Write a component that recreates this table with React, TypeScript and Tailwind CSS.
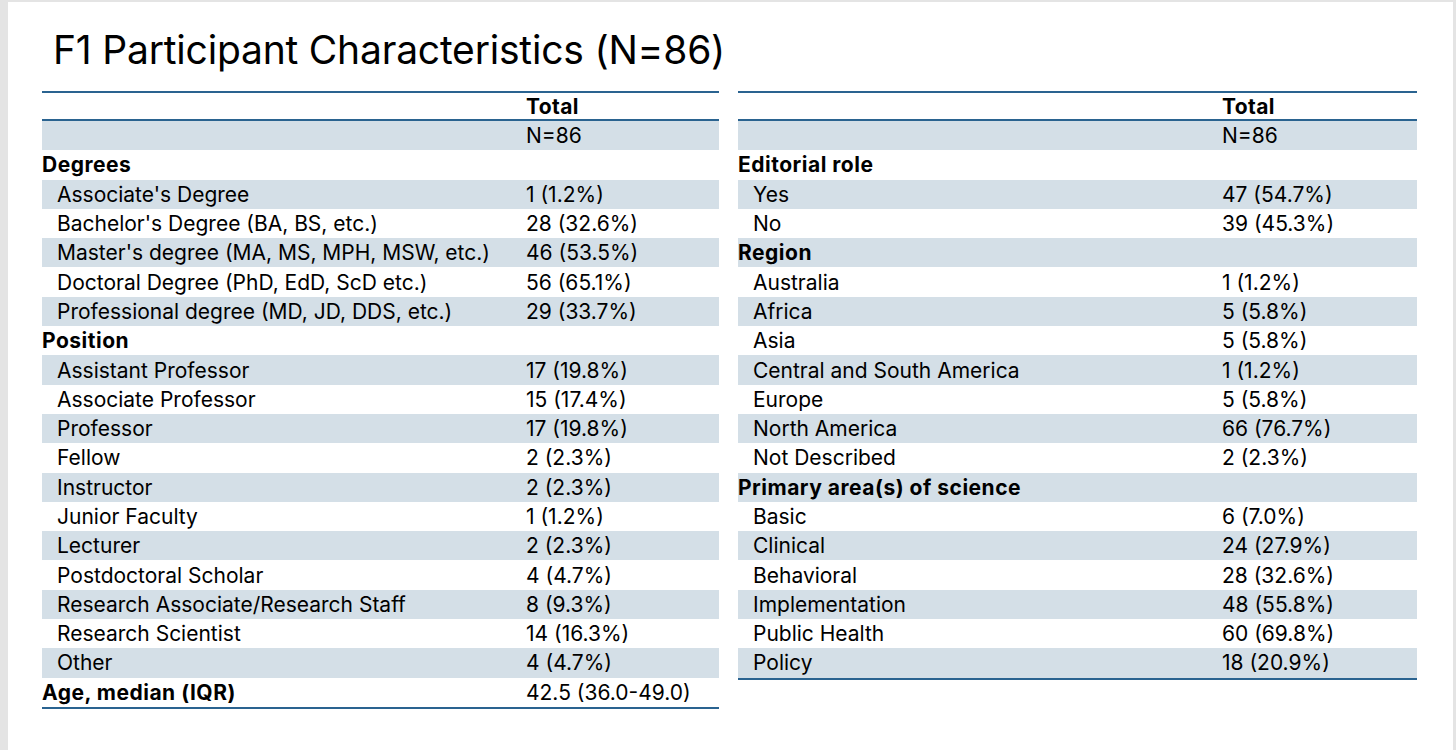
type Row = { label: string; value?: string; kind: "head" | "item" };

const leftRows: Row[] = [
  { label: "Degrees", kind: "head" },
  { label: "Associate's Degree", value: "1 (1.2%)", kind: "item" },
  { label: "Bachelor's Degree (BA, BS, etc.)", value: "28 (32.6%)", kind: "item" },
  { label: "Master's degree (MA, MS, MPH, MSW, etc.)", value: "46 (53.5%)", kind: "item" },
  { label: "Doctoral Degree (PhD, EdD, ScD etc.)", value: "56 (65.1%)", kind: "item" },
  { label: "Professional degree (MD, JD, DDS, etc.)", value: "29 (33.7%)", kind: "item" },
  { label: "Position", kind: "head" },
  { label: "Assistant Professor", value: "17 (19.8%)", kind: "item" },
  { label: "Associate Professor", value: "15 (17.4%)", kind: "item" },
  { label: "Professor", value: "17 (19.8%)", kind: "item" },
  { label: "Fellow", value: "2 (2.3%)", kind: "item" },
  { label: "Instructor", value: "2 (2.3%)", kind: "item" },
  { label: "Junior Faculty", value: "1 (1.2%)", kind: "item" },
  { label: "Lecturer", value: "2 (2.3%)", kind: "item" },
  { label: "Postdoctoral Scholar", value: "4 (4.7%)", kind: "item" },
  { label: "Research Associate/Research Staff", value: "8 (9.3%)", kind: "item" },
  { label: "Research Scientist", value: "14 (16.3%)", kind: "item" },
  { label: "Other", value: "4 (4.7%)", kind: "item" },
  { label: "Age, median (IQR)", value: "42.5 (36.0-49.0)", kind: "head" },
];

const rightRows: Row[] = [
  { label: "Editorial role", kind: "head" },
  { label: "Yes", value: "47 (54.7%)", kind: "item" },
  { label: "No", value: "39 (45.3%)", kind: "item" },
  { label: "Region", kind: "head" },
  { label: "Australia", value: "1 (1.2%)", kind: "item" },
  { label: "Africa", value: "5 (5.8%)", kind: "item" },
  { label: "Asia", value: "5 (5.8%)", kind: "item" },
  { label: "Central and South America", value: "1 (1.2%)", kind: "item" },
  { label: "Europe", value: "5 (5.8%)", kind: "item" },
  { label: "North America", value: "66 (76.7%)", kind: "item" },
  { label: "Not Described", value: "2 (2.3%)", kind: "item" },
  { label: "Primary area(s) of science", kind: "head" },
  { label: "Basic", value: "6 (7.0%)", kind: "item" },
  { label: "Clinical", value: "24 (27.9%)", kind: "item" },
  { label: "Behavioral", value: "28 (32.6%)", kind: "item" },
  { label: "Implementation", value: "48 (55.8%)", kind: "item" },
  { label: "Public Health", value: "60 (69.8%)", kind: "item" },
  { label: "Policy", value: "18 (20.9%)", kind: "item" },
];

function Table({ rows, width }: { rows: Row[]; width: string }) {
  return (
    <div className={`${width} border-t-2 border-b-2 border-[#2a6390]`}>
      <div className="grid h-[28px] grid-cols-[484px_1fr] items-center border-b-2 border-[#2a6390]">
        <span />
        <span className="font-bold tracking-[0.4px]">Total</span>
      </div>
      <div className="grid h-[29.3px] grid-cols-[484px_1fr] items-center bg-[#d4dfe7]">
        <span />
        <span>N=86</span>
      </div>
      {rows.map((r, i) => (
        <div
          key={r.label}
          className={`grid h-[29.3px] grid-cols-[484px_1fr] items-center ${i % 2 === 1 ? "bg-[#d4dfe7]" : ""}`}
        >
          <span className={r.kind === "head" ? "font-bold tracking-[0.5px]" : "pl-[15px]"}>{r.label}</span>
          <span>{r.value ?? ""}</span>
        </div>
      ))}
    </div>
  );
}

export default function App() {
  return (
    <div className="h-[750px] w-[1456px] bg-[#e4e4e4] pt-[2px] pl-[8px] pr-[3px]">
      <div className="h-full bg-white text-black [font-family:Inter,'Noto_Sans',sans-serif]">
        <h1 className="pt-[28px] pl-[45px] text-[39px] leading-none tracking-[-0.2px]">
          F1 Participant Characteristics (N=86)
        </h1>
        <div className="mt-[22px] flex items-start gap-[19px] pl-[34px] text-[21px] leading-none">
          <Table rows={leftRows} width="w-[677px]" />
          <Table rows={rightRows} width="w-[679px]" />
        </div>
      </div>
    </div>
  );
}
